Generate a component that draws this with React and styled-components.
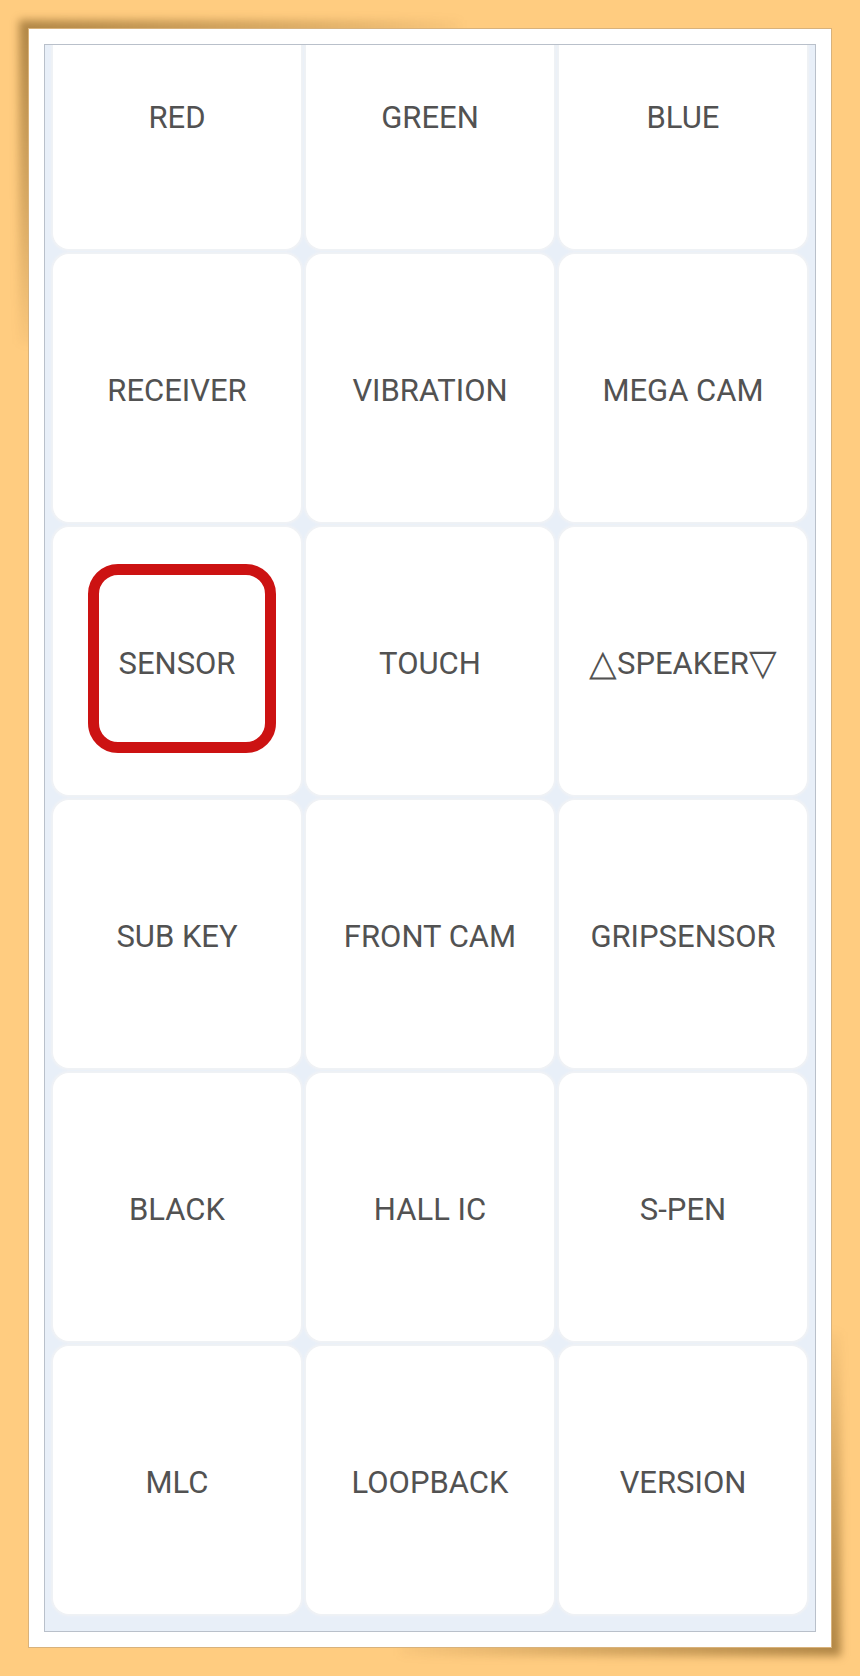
import React, { useEffect, useRef } from 'react'
import styled, { createGlobalStyle } from 'styled-components'

const GlobalStyle = createGlobalStyle`
  html {
    background: #FFCC80;
  }
  body {
    margin: 0;
    padding: 0;
    font-family: Roboto, "Noto Sans", sans-serif;
  }
`

const Page = styled.div`
  width: 860px;
  height: 1676px;
  box-sizing: border-box;
  padding: 28px;
`

const Frame = styled.div`
  position: relative;
  width: 804px;
  height: 1620px;
  box-sizing: border-box;
  padding: 15px;
  background: #fff;
  border: 1px solid #d8b27c;

  &::before,
  &::after {
    content: '';
    position: absolute;
    z-index: -1;
    width: 55%;
    height: 20%;
    filter: blur(4px);
  }
  &::before {
    top: -9px;
    left: -10px;
    background: radial-gradient(ellipse at 0 0, rgba(110, 75, 20, 0.55) 0%, rgba(110, 75, 20, 0.28) 40%, rgba(110, 75, 20, 0) 75%);
  }
  &::after {
    bottom: -9px;
    right: -10px;
    background: radial-gradient(ellipse at 100% 100%, rgba(110, 75, 20, 0.55) 0%, rgba(110, 75, 20, 0.28) 40%, rgba(110, 75, 20, 0) 75%);
  }
`

const Panel = styled.div`
  height: 100%;
  box-sizing: border-box;
  border: 1px solid #b9c0ca;
  background: #e8eff8;
  overflow-y: auto;
  scrollbar-width: none;
  &::-webkit-scrollbar {
    display: none;
  }
`

const Grid = styled.div`
  display: grid;
  grid-template-columns: repeat(3, 1fr);
  grid-auto-rows: 268px;
  gap: 5px;
  padding: 8px 8px 17px;
`

const Cell = styled.div`
  position: relative;
  display: flex;
  align-items: center;
  justify-content: center;
  padding-top: 4px;
  box-sizing: border-box;
  background: #fff;
  border-radius: 16px;
  box-shadow: 0 0 2px 2px #f0f2f5;
  color: #525252;
  font-size: 31px;
  font-weight: 400;
  white-space: nowrap;
`

const Glyph = styled.span`
  font-family: "DejaVu Sans", sans-serif;
  font-size: 36px;
  font-weight: 300;
  line-height: 1;
`

const Focus = styled.div`
  position: absolute;
  left: 35px;
  top: 37px;
  width: 188px;
  height: 189px;
  box-sizing: border-box;
  border: 11px solid #cc1212;
  border-radius: 30px;
  pointer-events: none;
`

const items = [
  'RED', 'GREEN', 'BLUE',
  'RECEIVER', 'VIBRATION', 'MEGA CAM',
  'SENSOR', 'TOUCH', 'SPEAKER',
  'SUB KEY', 'FRONT CAM', 'GRIPSENSOR',
  'BLACK', 'HALL IC', 'S-PEN',
  'MLC', 'LOOPBACK', 'VERSION',
]

export default function App() {
  const panelRef = useRef(null)

  useEffect(() => {
    const el = panelRef.current
    if (el) el.scrollTop = el.scrollHeight
  }, [])

  return (
    <Page>
      <GlobalStyle />
      <Frame>
        <Panel ref={panelRef}>
          <Grid>
            {items.map((label) => (
              <Cell key={label}>
                {label === 'SENSOR' && <Focus />}
                {label === 'SPEAKER' ? (
                  <>
                    <Glyph>△</Glyph>SPEAKER<Glyph>▽</Glyph>
                  </>
                ) : label}
              </Cell>
            ))}
          </Grid>
        </Panel>
      </Frame>
    </Page>
  )
}
